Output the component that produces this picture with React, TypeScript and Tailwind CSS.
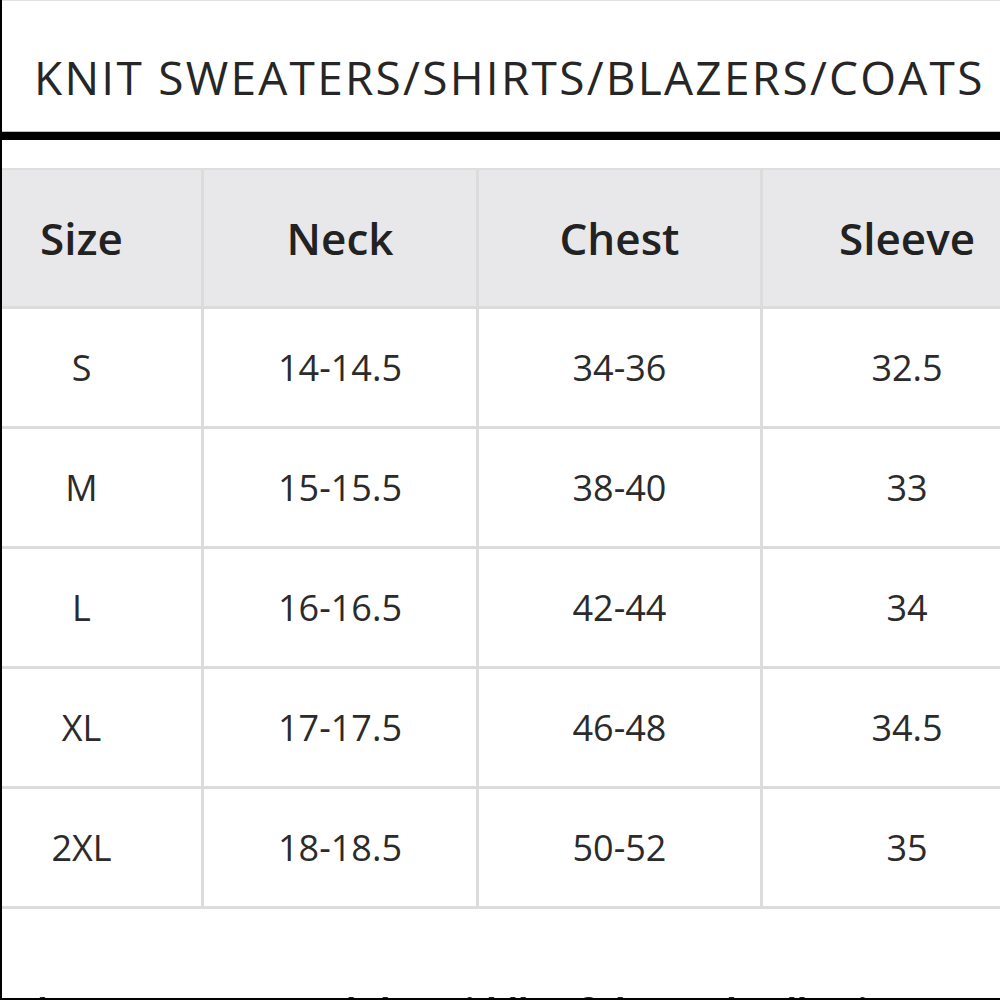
import React from "react";

const HEADERS = ["Size", "Neck", "Chest", "Sleeve"];

const ROWS = [
  ["S", "14-14.5", "34-36", "32.5"],
  ["M", "15-15.5", "38-40", "33"],
  ["L", "16-16.5", "42-44", "34"],
  ["XL", "17-17.5", "46-48", "34.5"],
  ["2XL", "18-18.5", "50-52", "35"],
];

const App = () => {
  return (
    <div className="w-[1000px] h-[1000px] overflow-hidden bg-white border-l-2 border-b-2 border-black flex flex-col font-['Open_Sans',sans-serif] text-[#262626]">
      {/* Title */}
      <div className="h-px bg-[#e2e2e2] shrink-0" />
      <div className="h-[130px] shrink-0 flex items-center pl-[32px]">
        <h1 className="text-[46px] font-normal tracking-[0.049em] whitespace-nowrap leading-none mt-[22px]">
          KNIT SWEATERS/SHIRTS/BLAZERS/COATS
        </h1>
      </div>
      <div className="h-px bg-[#bdbdbd] shrink-0" />
      <div className="h-[8px] bg-black shrink-0" />
      <div className="h-[28px] shrink-0" />

      {/* Size table */}
      <div className="ml-[-40px] w-[1092px] shrink-0 grid grid-cols-[242px_275px_284px_291px] border-t-2 border-[#dedede]">
        {HEADERS.map((h) => (
          <div
            key={h}
            className="h-[139px] bg-[#e8e8ea] border-r-[3px] border-b-[3px] border-[#dcdcdc] flex items-center justify-center text-[44px] font-semibold text-[#222]"
          >
            {h}
          </div>
        ))}
        {ROWS.map((row, i) =>
          row.map((cell, j) => (
            <div
              key={`${i}-${j}`}
              className="h-[120px] border-r-[3px] border-b-[3px] border-[#dcdcdc] flex items-center justify-center text-[36px] text-[#2b2b2b]"
            >
              {cell}
            </div>
          ))
        )}
      </div>

      {/* Note below, cut off by the frame */}
      <p className="mt-[84px] ml-[-30px] whitespace-nowrap text-[34px] font-bold leading-none text-[#222]">
        Neck: Measure around the middle of the neck, allowing room for two fingers
      </p>
    </div>
  );
};

export default App;
